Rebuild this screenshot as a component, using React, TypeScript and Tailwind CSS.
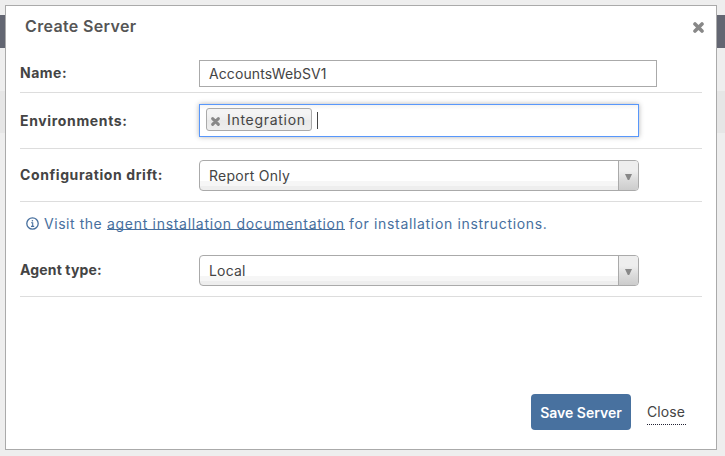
import type { ReactNode } from "react";

function CrossIcon({ className }: { className: string }) {
  return (
    <svg viewBox="0 0 11 11" className={className} fill="none" stroke="currentColor">
      <path d="M2 2 L9 9 M9 2 L2 9" strokeWidth="3.6" strokeLinecap="round" />
    </svg>
  );
}

function Field({ label, className, labelClass, children }: { label: string; className: string; labelClass: string; children: ReactNode }) {
  return (
    <div className={`flex items-start border-b border-[#dddddd] ${className}`}>
      <div className={`w-[179px] shrink-0 font-bold leading-[26px] whitespace-nowrap ${labelClass}`}>{label}</div>
      {children}
    </div>
  );
}

function Select({ value, valueClass }: { value: string; valueClass: string }) {
  return (
    <div className="flex h-[31px] w-[440px] overflow-hidden rounded-[4px] border border-[#aaaaaa] bg-[linear-gradient(to_bottom,#fff_0_20px,#f6f6f6_20px_25px,#eee_25px)]">
      <div className={`flex-1 pl-[9px] leading-[29px] ${valueClass}`}>{value}</div>
      <div className="flex w-[20px] justify-center border-l border-[#aaaaaa] bg-[linear-gradient(to_bottom,#eee_0,#eee_10px,#ddd_18px,#ccc_29px)] pt-[13px]">
        <svg viewBox="0 0 7 6" className="h-[6px] w-[7px]"><path d="M0 0H7L4.2 6H2.8Z" fill="#888" /></svg>
      </div>
    </div>
  );
}

export default function App() {
  return (
    <div className="relative h-[456px] w-[725px] overflow-hidden bg-[#eeeeee] pt-[15px] font-['Inter',sans-serif] text-[14px] text-[#444444]">
      <div className="h-[33px] bg-[#636672]" />
      <div className="mt-[43px] h-[42px] bg-[#e6e6e6]" />
      <div className="absolute top-[5px] left-[5px] flex h-[445px] w-[712px] flex-col border border-[#aaaaaa] bg-white px-[14px]">
        <div className="flex h-[48px] items-start justify-between pl-[5px]">
          <h1 className="pt-[8px] text-[16px] leading-[24px] font-semibold tracking-[0.35px] text-[#555555]">Create Server</h1>
          <CrossIcon className="mt-[16px] -mr-[2px] h-[11px] w-[11px] text-[#888888]" />
        </div>
        <Field label="Name:" className="h-[39px] pt-[6px]" labelClass="tracking-[0.5px]">
          <div className="h-[27px] w-[458px] border border-[#aaaaaa] pl-[9px] leading-[25px] tracking-[0.1px]">AccountsWebSV1</div>
        </Field>
        <Field label="Environments:" className="h-[56px] pt-[11px]" labelClass="pt-[4px] tracking-[0.65px]">
          <div className="flex h-[33px] w-[440px] items-start border border-[#5897fb] bg-[linear-gradient(to_bottom,#f4f4f4,#fff_5px)] pt-[3px] pl-[6px] shadow-[0_0_5px_rgba(0,0,0,0.3)]">
            <div className="flex h-[23px] w-[106px] items-center rounded-[3px] border border-[#aaaaaa] bg-[linear-gradient(to_bottom,#f4f4f4_20%,#eee_50%,#e8e8e8_52%,#eee)] pl-[4px]">
              <CrossIcon className="mt-[3px] mr-[7px] h-[9px] w-[9px] text-[#888888]" />
              <span className="tracking-[0.7px]">Integration</span>
            </div>
            <div className="mt-[4px] ml-[5px] h-[17px] w-px bg-[#444444]" />
          </div>
        </Field>
        <Field label="Configuration drift:" className="h-[53px] pt-[11px]" labelClass="pt-[2px] tracking-[0.6px]">
          <Select value="Report Only" valueClass="tracking-[0.25px]" />
        </Field>
        <div className="flex h-[42px] items-center pl-[6px] whitespace-nowrap text-[#476f9e]">
          <svg viewBox="0 0 13 13" className="mr-[5px] h-[13px] w-[13px]" fill="none" stroke="currentColor">
            <circle cx="6.5" cy="6.5" r="5.7" strokeWidth="1.3" />
            <path d="M5.1 5.7H6.7V9.4M5 9.4H8.2" strokeWidth="1.1" />
            <circle cx="6.4" cy="3.7" r=".8" fill="currentColor" stroke="none" />
          </svg>
          <span className="w-[63px] tracking-[0.55px]">Visit the</span>
          <span className="h-[14px] w-[238px] border-b border-[#476f9e] leading-[15px] tracking-[0.7px]">agent installation documentation</span>
          <span className="ml-[4px] tracking-[0.67px]">for installation instructions.</span>
        </div>
        <Field label="Agent type:" className="h-[53px] pt-[11px]" labelClass="pt-[2px] tracking-[0.15px]">
          <Select value="Local" valueClass="tracking-[0.2px]" />
        </Field>
        <div className="mt-auto mb-[19px] flex items-start justify-end pr-[16px]">
          <button className="h-[36px] w-[100px] rounded-[4px] bg-[#48719f] font-semibold whitespace-nowrap text-white">Save Server</button>
          <span className="mt-[8px] ml-[16px] h-[23px] w-[39px] border-b border-dotted border-[#222233] leading-[20px] tracking-[0.1px]">Close</span>
        </div>
      </div>
    </div>
  );
}
